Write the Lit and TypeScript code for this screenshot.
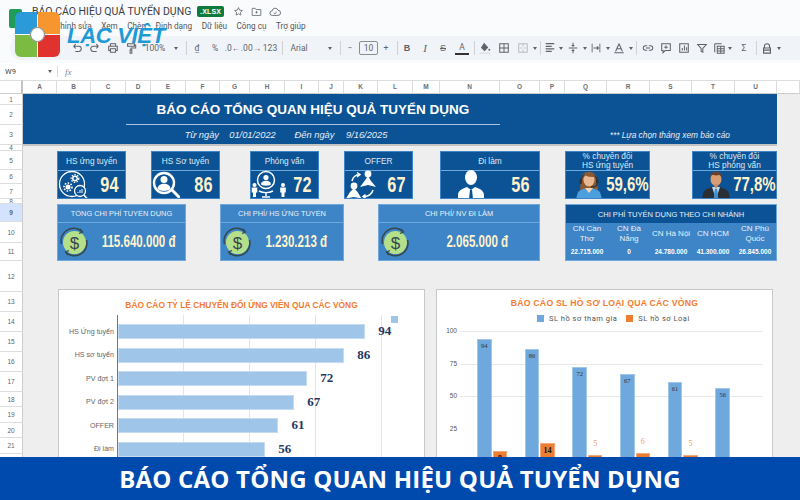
import { LitElement, html, css, svg } from "lit";
import { customElement } from "lit/decorators.js";

const COLS = ["A","B","C","D","E","F","G","H","I","J","K","L","M","N","O","P","Q","R","S","T","U"];
const ROWS = Array.from({ length: 23 }, (_, i) => i + 1);

const s = (inner: unknown, w = 12, h = 12) =>
  html`<svg width=${w} height=${h} viewBox="0 0 14 14" fill="none" stroke="#5f6368" stroke-width="1.200">${inner}</svg>`;

const TB: Record<string, unknown> = {
  undo: svg`<path d="M3 5h6a3 3 0 0 1 0 6H5M3 5l2.500-2.500M3 5l2.500 2.500"/>`,
  redo: svg`<path d="M11 5H5a3 3 0 0 0 0 6h4M11 5L8.500 2.500M11 5L8.500 7.500"/>`,
  print: svg`<path d="M4 5V2h6v3M4 10H2V5h10v5h-2M4 8h6v4H4z"/>`,
  paint: svg`<path d="M3 2h8v3H3zM11 3.500h1.500V7H7v2M6 9h2v4H6z"/>`,
  fill: svg`<path d="M6 2l4 4.500-3.500 3.500L3 6.500z" fill="#5f6368"/><circle cx="12" cy="9" r="1.100" fill="#5f6368" stroke="none"/><path d="M1 13h12" stroke="#ddd" stroke-width="1.500"/>`,
  borders: svg`<path d="M2 2h10v10H2zM7 2v10M2 7h10"/>`,
  merge: svg`<path d="M2 2h10v10H2zM7 2v3M7 9v3M4 7h2M8 7h2" stroke="#b9bcc0"/>`,
  align: svg`<path d="M2 2h10M2 5h7M2 8h10M2 11h7" stroke-width="1.400"/>`,
  valign: svg`<path d="M2 7h10M7 1v3.500M7 9.500V13M5.500 3.500L7 5l1.500-1.500M5.500 10.500L7 9l1.500 1.500"/>`,
  wrap: svg`<path d="M2.500 2v10M11.500 2v10" stroke-width="1"/><path d="M4 7h6M8 5l2 2-2 2"/>`,
  rotate: svg`<path d="M7 2l-4 9M7 2l4 9M4.500 8h5M1.500 12.500h11"/>`,
  link: svg`<path d="M6 4.500H4a2.500 2.500 0 0 0 0 5h2M8 4.500h2a2.500 2.500 0 0 1 0 5H8M4.500 7h5"/>`,
  comment: svg`<path d="M2 2h10v8H6l-2.500 2.500V10H2zM7 4v4M5 6h4"/>`,
  chart: svg`<path d="M2 2h10v10H2zM5 10V7M7.500 10V4M10 10V6"/>`,
  filter: svg`<path d="M2 3h10L8 7.500V12L6 11V7.500z"/>`,
  table: svg`<path d="M2 2h8M2 2v10M5 5h8v8H5zM5 8h8M5 10.500h8M9 5v8" stroke-width="1.200"/>`,
  lock: svg`<path d="M4 7V5a3 3 0 0 1 6 0v2M3 7h8v6H3zM3 9.500h8" stroke-width="1.300"/>`,
};

type Tool = { t: string; v?: string; w?: number };
const sp = (w: number): Tool => ({ t: "sp", w });
const TOOLS: Tool[] = [
  { t: "i", v: "undo" }, { t: "i", v: "redo" }, { t: "i", v: "print" }, { t: "i", v: "paint" },
  { t: "x", v: "100%", w: 30 }, { t: "c", w: 8 }, sp(5), { t: "sep" },
  { t: "x", v: "₫", w: 14 }, sp(2), { t: "x", v: "%", w: 18 }, { t: "x", v: ".0←", w: 17 }, { t: "x", v: ".00→", w: 20 }, { t: "x", v: "123", w: 18 }, { t: "sep" },
  sp(4), { t: "x", v: "Arial", w: 18 }, { t: "c", w: 24 }, sp(5), { t: "sep" },
  { t: "x", v: "−", w: 12 }, sp(3), { t: "box", v: "10" }, { t: "x", v: "+", w: 16 }, { t: "sep" },
  { t: "b", v: "B", w: 12 }, sp(3), { t: "em", v: "I" }, { t: "st", v: "S" }, sp(1), { t: "a", v: "A" }, { t: "sep" },
  { t: "i", v: "fill", w: 14 }, sp(3), { t: "i", v: "borders" }, sp(1), { t: "i", v: "merge" }, { t: "c", w: 5 }, { t: "sep" },
  { t: "i", v: "align", w: 12 }, { t: "c", w: 7 }, sp(1), { t: "i", v: "valign" }, { t: "c", w: 5 }, { t: "i", v: "wrap" }, { t: "c", w: 5 }, { t: "i", v: "rotate" }, { t: "c", w: 5 }, { t: "sep" },
  { t: "i", v: "link", w: 16 }, sp(1), { t: "i", v: "comment" }, { t: "i", v: "chart" }, { t: "i", v: "filter" }, { t: "i", v: "table", w: 16 }, { t: "c", w: 5 }, sp(3), { t: "x", v: "Σ", w: 18 }, { t: "sep" },
  { t: "i", v: "lock", w: 14 }, { t: "c", w: 7 },
];

const icon1 = svg`<svg class="ic" width="31" height="29" viewBox="0 0 31 29" fill="none" stroke="#fff">
  <circle cx="14" cy="14" r="12.500" stroke-width="1.300"/>
  <circle cx="17" cy="8.500" r="2.200" stroke-width="1.500"/><circle cx="17" cy="8.500" r="3.800" stroke-width="1.300" stroke-dasharray="1.500 1.300"/>
  <circle cx="10" cy="17" r="2.500" fill="#fff" stroke="none"/><circle cx="10" cy="17" r="4" stroke-width="1.600" stroke-dasharray="1.600 1.400"/>
  <circle cx="22" cy="21" r="5.500" fill="#0b5394" stroke-width="1.300"/><path d="M26 25l3 3.500" stroke-width="1.500"/>
  <path d="M20 23v-1M22 23v-3M24 23v-4" stroke-width="1"/></svg>`;
const icon2 = svg`<svg class="ic" width="28" height="29" viewBox="0 0 28 29" fill="none" stroke="#fff">
  <circle cx="12" cy="13" r="10" stroke-width="2.400"/><path d="M20 20l7 7" stroke-width="3" stroke-linecap="round"/>
  <circle cx="12" cy="9.500" r="3.500" fill="#fff" stroke="none"/><path d="M5.500 19c0-7 13-7 13 0-3 2.500-10 2.500-13 0z" fill="#fff" stroke="none"/></svg>`;
const person = (x: number, y: number, k = 1) => svg`<g transform="translate(${x} ${y}) scale(${k})" fill="#fff" stroke="none"><circle cx="0" cy="2" r="2"/><path d="M-2.800 4.500h5.600v5H1.500V14h-3V9.500h-1.300z"/></g>`;
const icon3 = svg`<svg class="ic" width="37" height="29" viewBox="0 0 37 29" fill="none" stroke="#fff">
  <circle cx="15" cy="10" r="8.500" stroke-width="1.500"/><circle cx="15" cy="7.500" r="2.600" fill="#fff" stroke="none"/>
  <path d="M10 14.500c0-5 10-5 10 0-2.500 1.600-7.500 1.600-10 0z" fill="#fff" stroke="none"/>
  <path d="M8 21c4 2 10 2 14 0M15 22v4M11 27h8" stroke-width="1.500"/>
  ${person(3.500, 13)}${person(32, 13)}</svg>`;
const icon4 = svg`<svg class="ic" width="34" height="29" viewBox="0 0 34 29" fill="none" stroke="#fff">
  <circle cx="23" cy="4" r="3.400" fill="#fff" stroke="none"/><path d="M23 6l3 5 5 6-8-2-8 2 4.500-6z" fill="#fff" stroke="none"/>
  <circle cx="9" cy="16" r="3.400" fill="#fff" stroke="none"/><path d="M9 18l3.500 4 4 6.500-7.500-1.500-8 1.500 4-6.500z" fill="#fff" stroke="none"/>
  <path d="M7 11c1-4 3-6 7-6.500M12 2.500l3 2-3 2.500M28 20c-1 4-5 7-9 6.500M20.500 24.500L18 26.500l3 2" stroke-width="1.500"/></svg>`;
const icon5 = svg`<svg class="ic" width="28" height="29" viewBox="0 0 28 29">
  <ellipse cx="14" cy="7.500" rx="6" ry="7.500" fill="#fff"/><path d="M1 29v-4c0-5 6-7 9-8l4 3 4-3c3 1 9 3 9 8v4z" fill="#fff"/>
  <path d="M13 20h2l1 9h-4z" fill="#0b5394"/></svg>`;
const icon6 = svg`<svg class="ic" width="28" height="29" viewBox="0 0 28 29">
  <path d="M6 10c0-11 16-11 16 0l1 10H5z" fill="#8a5a35"/><ellipse cx="14" cy="10" rx="5.500" ry="6.500" fill="#eab994"/>
  <path d="M1 29l2-7c2-2 7-4 11-4s9 2 11 4l2 7z" fill="#4a9fdc"/><path d="M10 18l4 5 4-5z" fill="#f4d3b8"/>
  <path d="M6 11c0-10 16-10 16 0" fill="none" stroke="#333" stroke-width="1.200"/><rect x="4.500" y="9" width="2.500" height="5" rx="1" fill="#333"/><rect x="21" y="9" width="2.500" height="5" rx="1" fill="#333"/>
  <path d="M22 14c0 2-3 3-6 3" fill="none" stroke="#333" stroke-width="1.300"/><path d="M9 4c2 3 7 3 11 3 0-5-9-6-11-3z" fill="#8a5a35"/></svg>`;
const icon7 = svg`<svg class="ic" width="28" height="29" viewBox="0 0 28 29">
  <path d="M0 29l1.500-7c2-3 7-5 12.500-5s10.500 2 12.500 5l1.500 7z" fill="#2a2e35"/><path d="M10 17l4 12 4-12z" fill="#bfd9ee"/>
  <path d="M12.800 19h2.400l1 9-2.200 1-2.200-1z" fill="#3f8fd0"/><ellipse cx="14" cy="9" rx="5.500" ry="7" fill="#d99c73"/><path d="M11 14l3 5 3-5z" fill="#c98c63"/>
  <path d="M8 9c-1-9 13-10 12 0-1-3-2-4-3-4-3 1-6 0-7 0-1 1-2 2-2 4z" fill="#6b4226"/></svg>`;

const KPIS = [
  { t: ["HS ứng tuyển"], n: "94", ic: icon1, cls: "" },
  { t: ["HS Sơ tuyển"], n: "86", ic: icon2, cls: "" },
  { t: ["Phỏng vấn"], n: "72", ic: icon3, cls: "" },
  { t: ["OFFER"], n: "67", ic: icon4, cls: "" },
  { t: ["Đi làm"], n: "56", ic: icon5, cls: "wide" },
  { t: ["% chuyển đổi", "HS ứng tuyển"], n: "59,6%", ic: icon6, cls: "pct" },
  { t: ["% chuyển đổi", "HS phỏng vấn"], n: "77,8%", ic: icon7, cls: "pct" },
];
const kpiCols = ["b", "e", "h", "k", "n", "q", "t"];

const COSTS = [
  { k: "cb", t: "TỔNG CHI PHÍ TUYỂN DỤNG", v: "115.640.000 đ" },
  { k: "cg", t: "CHI PHÍ/ HS ỨNG TUYỂN", v: "1.230.213 đ" },
  { k: "cl", t: "CHI PHÍ/ NV ĐI LÀM", v: "2.065.000 đ" },
];
const BRANCH: [string[], string][] = [
  [["CN Cần", "Thơ"], "22.715.000"], [["CN Đà", "Nẵng"], "0"], [["CN Hà Nội"], "24.780.000"], [["CN HCM"], "41.300.000"], [["CN Phú", "Quốc"], "26.845.000"],
];
const FUNNEL = [["HS Ứng tuyển", 94], ["HS sơ tuyển", 86], ["PV đợt 1", 72], ["PV đợt 2", 67], ["OFFER", 61], ["Đi làm", 56]] as [string, number][];
const COLUMNS = [[94, 8], [86, 14], [72, 5], [67, 6], [61, 5], [56, 0]];

const coin = svg`<svg class="coin" width="32" height="32" viewBox="0 0 32 32" fill="none">
  <circle cx="16.500" cy="16.500" r="11.500" fill="#b5e08a"/>
  <path d="M3.500 18A12.500 12.500 0 0 1 24 5.500M28.500 14A12.500 12.500 0 0 1 8 26.500" stroke="#37474f" stroke-width="1.500"/>
  <path d="M22 3l2.500 3-3.500 1.500M10 29l-2.500-3 3.500-1.500" stroke="#37474f" stroke-width="1.300"/>
  <text x="16.500" y="22.500" text-anchor="middle" font-family="Liberation Sans, sans-serif" font-size="17" fill="#37474f" stroke="none">$</text></svg>`;

@customElement("app-root")
export class AppRoot extends LitElement {
  static styles = css`
    :host { display: block; width: 800px; height: 500px; font-family: "Roboto", "Liberation Sans", sans-serif; }
    * { box-sizing: border-box; }
    .page { position: relative; width: 800px; height: 500px; overflow: hidden; background: #f9fbfd; display: flex; flex-direction: column; color: #444746; }
    .head { height: 36px; flex: none; position: relative; }
    .file { display: flex; align-items: center; height: 20px; padding: 3px 0 0 32px; gap: 7px; }
    .file .name { font-size: 10.500px; color: #3c4043; white-space: nowrap; width: 158px; }
    .badge { background: #0e7a3c; color: #fff; font: bold 7px "Liberation Sans", sans-serif; padding: 2px 3px; border-radius: 2px; letter-spacing: .2px; margin-right: 1.500px; }
    .sheeticon { position: absolute; left: 9px; top: 9px; width: 13px; height: 19px; background: #1f9d58; border-radius: 2px; }
    .menu { display: flex; gap: 9.500px; padding-left: 55px; font-size: 8.200px; color: #555; height: 12px; align-items: center; white-space: nowrap; }
    .tools { height: 24px; flex: none; margin-left: 10px; padding-left: 58px; background: #f0f4f9; display: flex; align-items: center; border-radius: 12px 0 0 12px; font: 8.500px "Roboto", sans-serif; color: #5f6368; white-space: nowrap; overflow: hidden; }
    .tool { width: 18px; height: 18px; display: flex; align-items: center; justify-content: center; flex: none; }
    .spc { flex: none; height: 1px; }
    .sep { width: 1px; height: 14px; background: #d0d3d6; margin: 0 3px; flex: none; }
    .caret { display: flex; justify-content: flex-end; align-items: center; flex: none; height: 18px; }
    .caret::after { content: ""; border: 2.500px solid transparent; border-top: 3px solid #5f6368; border-bottom: 0; }
    .numbox { width: 19px; height: 14px; border: 1px solid #8a8d90; border-radius: 2px; text-align: center; line-height: 12px; flex: none; }
    .tb { font-weight: bold; font-family: "Liberation Sans", sans-serif; font-size: 9px; }
    .ti { font-style: italic; font-family: "Liberation Serif", serif; font-size: 11px; }
    .ts { text-decoration: line-through; font-family: "Liberation Sans", sans-serif; font-size: 9px; }
    .ta { border-bottom: 2px solid #333; height: 13px; width: 14px; line-height: 10px; text-align: center; font-size: 8.500px; }
    .fx { height: 20px; flex: none; background: #fff; border-top: 3px solid #f9fbfd; display: flex; align-items: center; font-size: 7.500px; color: #444746; padding-left: 5px; }
    .fx .ref { width: 38px; }
    .fx .caret { width: 9px; }
    .fx .s2 { width: 1px; height: 11px; background: #ddd; margin: 0 7px 0 5px; }
    .fx i { font-family: "Liberation Serif", serif; color: #80868b; font-size: 9px; }

    .sheet { flex: 1; background: #eeeeee; display: grid; overflow: hidden;
      grid-template-columns: 23px 34px 34px 35px 25px 35px 34px 30px 35px 34px 25px 34px 35px 27px 60px 40px 25px 42px 43px 42px 43px 42px 23px;
      grid-template-rows: 14px 11px 20px 20px 6px 19px 14px 15px 5px 18px 21px 18px 31px 20px 20px 20px 20px 20px 15px 16px 15px 16px 16px 30px; }
    .corner { grid-column: 1; grid-row: 1; background: #fff; border-top: 1px solid #ddd; border-right: 2px solid #c4c4c4; border-bottom: 1px solid #ccc; }
    .colh { grid-row: 1; background: #fff; border-top: 1px solid #ddd; border-right: 1px solid #ddd; border-bottom: 1px solid #ccc; font: bold 6.500px "Liberation Sans", sans-serif; color: #6b6f73; display: flex; align-items: center; justify-content: center; padding-bottom: 1px; }
    .colv { grid-column: 23; }
    .rowh { grid-column: 1; background: #fff; border-bottom: 1px solid #ddd; border-right: 1px solid #ccc; font: 6.500px "Liberation Sans", sans-serif; color: #5f6368; display: flex; align-items: center; justify-content: center; overflow: hidden; }
    .rowh.sel { background: #d3e3fd; font-weight: bold; }
    .band { grid-column: 2 / 23; grid-row: 2 / 5; background: #0b5394; border-bottom: 2px solid #c4c4c4; margin-bottom: -1px; }
    .title { grid-column: 5 / 16; grid-row: 2 / 4; border-bottom: 1px solid #a9c5e6; color: #fff; font: bold 13.500px "Liberation Sans", sans-serif; display: flex; align-items: center; justify-content: center; white-space: nowrap; padding-top: 1px; }
    .meta { grid-row: 4; color: #e6eef7; font: italic 9.300px "Liberation Sans", sans-serif; display: flex; align-items: center; white-space: nowrap; justify-content: center; }
    .m1 { grid-column: 6 / 8; justify-content: flex-end; padding-right: 1px; }
    .m2 { grid-column: 8 / 10; }
    .m3 { grid-column: 10 / 12; }
    .m4 { grid-column: 12 / 14; justify-content: flex-start; padding-left: 2px; }
    .m5 { grid-column: 18 / 22; justify-content: flex-end; padding-right: 5px; font-size: 8.350px; }

    .kpi { grid-row: 6 / 9; background: #0b5394; border: 1px solid #3d85c6; display: flex; flex-direction: column; min-width: 0; overflow: hidden; }
    .kpi.b { grid-column: 3 / 5; } .kpi.e { grid-column: 6 / 8; } .kpi.h { grid-column: 9 / 11; } .kpi.k { grid-column: 12 / 14; }
    .kpi.n { grid-column: 15 / 17; } .kpi.q { grid-column: 18 / 20; } .kpi.t { grid-column: 21 / 23; }
    .kpi .hd { height: 19px; flex: none; border-bottom: 1px solid #6fa8dc; color: #dfe9f5; font: 8.300px/1.050 "Liberation Sans", sans-serif; display: flex; flex-direction: column; align-items: center; justify-content: center; }
    .kpi .bd { flex: 1; display: flex; align-items: center; justify-content: flex-end; padding: 0 7px 0 0; min-height: 0; }
    .kpi .ic { flex: none; display: block; margin-right: auto; }
    .num { flex: none; white-space: nowrap; margin-left: -60px; transform-origin: right center; transform: scaleX(.74); font-family: "Liberation Sans", sans-serif; font-weight: bold; color: #fff2cc; font-size: 22px; }
    .kpi.wide .bd { padding: 0 10px 0 16px; }
    .kpi.pct .bd { padding: 0 0 0 9px; }
    .kpi.pct .num { font-size: 20px; transform: scaleX(.75); }
    .cost { grid-row: 10 / 13; background: #3d85c6; border: 1px solid #6fa8dc; display: flex; flex-direction: column; }
    .cost.cb { grid-column: 3 / 7; } .cost.cg { grid-column: 8 / 12; } .cost.cl { grid-column: 13 / 17; }
    .cost .hd { height: 18px; flex: none; border-bottom: 1px solid #6fa8dc; color: #e8f0f9; font: 7.400px "Liberation Sans", sans-serif; display: flex; align-items: center; justify-content: center; }
    .cost .bd { flex: 1; display: flex; align-items: center; justify-content: flex-end; padding: 0 9px 0 0; }
    .cost .num { font-size: 16.500px; transform: scaleX(.7); }
    .cost.cg .bd { padding-right: 16px; }
    .cost.cl .bd { padding-right: 31px; }
    .coin { flex: none; margin-right: auto; }
    .branch { grid-column: 18 / 23; grid-row: 10 / 13; background: #3d85c6; border: 1px solid #6fa8dc; display: flex; flex-direction: column; }
    .branch .hd { height: 18px; flex: none; background: #0b5394; color: #e8f0f9; font: 7.550px "Liberation Sans", sans-serif; display: flex; align-items: center; justify-content: center; }
    .branch .cols { flex: 1; display: grid; grid-template-columns: repeat(5, 1fr); }
    .branch .col { display: flex; flex-direction: column; align-items: center; color: #e8f0f9; text-align: center; padding-top: 1px; min-width: 0; }
    .branch .lab { font: 8px/9.500px "Liberation Sans", sans-serif; height: 19px; display: flex; flex-direction: column; justify-content: center; white-space: nowrap; }
    .branch .val { font: bold 6.500px "Liberation Sans", sans-serif; color: #fff; white-space: nowrap; margin-top: 5px; }

    .chart { grid-row: 13 / 25; background: #fff; border: 1px solid #c8c8c8; margin-top: 28px; overflow: hidden; }
    .c1 { grid-column: 3 / 15; margin-left: 1px; margin-right: 15px; }
    .c2 { grid-column: 15 / 23; margin-left: -4px; margin-right: 4px; }
    .ctitle { color: #f47b30; font: bold 8.400px "Liberation Sans", sans-serif; text-align: center; white-space: nowrap; }
    .c1 .ctitle { padding-top: 10px; height: 25px; }
    .plot1 { margin-left: 58px; height: 142px; border-left: 1px solid #777; display: flex; flex-direction: column; gap: 8.600px; padding-top: 9px; position: relative;
      background: repeating-linear-gradient(90deg, transparent 0 65px, #e4e4e4 65px 66px); }
    .frow { display: flex; align-items: center; height: 15px; flex: none; }
    .flab { position: absolute; right: 100%; margin-right: 4px; font: 7.100px "Liberation Sans", sans-serif; color: #666; white-space: nowrap; }
    .fbar { height: 15px; background: #9fc5e8; border: 1px solid #c4dbf1; flex: none; }
    .fval { font: bold 13px "Liberation Serif", serif; color: #1f3864; margin-left: 13px; margin-top: -1px; }
    .mini { position: absolute; left: 273px; top: 1px; width: 7px; height: 7px; background: #9fc5e8; }
    .c2 .ctitle { font-size: 8.700px; letter-spacing: .25px; padding-top: 8px; height: 21px; }
    .legend { display: flex; gap: 9px; padding-left: 100px; height: 14px; align-items: center; font: 7.500px "Roboto", sans-serif; letter-spacing: .5px; color: #555; white-space: nowrap; }
    .legend span { display: flex; align-items: center; gap: 5px; }
    .legend b { width: 7px; height: 7px; display: block; }
    .blue { background: #6fa8dc; } .orange { background: #ed7d31; }
    .plot2 { display: flex; height: 135px; padding-top: 6px; margin-left: 2px; }
    .yaxis { width: 21px; height: 130px; padding-right: 3px; font: 6.500px "Liberation Sans", sans-serif; color: #555; display: flex; flex-direction: column; justify-content: space-between; align-items: flex-end; }
    .yaxis div { height: 0; line-height: 0; }
    .bars { width: 302px; height: 130px; display: flex; align-items: flex-end; padding-left: 17px; border-top: 1px solid #e8e8e8;
      background: repeating-linear-gradient(180deg, transparent 0 31.500px, #e8e8e8 31.500px 32.500px); }
    .grp { width: 47.700px; flex: none; display: flex; align-items: flex-end; height: 100%; gap: 1px; }
    .bar { width: 14.500px; flex: none; position: relative; display: flex; justify-content: center; border: 1px solid rgba(255,255,255,.35); }
    .bar span { font: 6.500px "Liberation Serif", serif; color: #333; padding-top: 2px; }
    .bar.orange span { font: bold 8px "Liberation Serif", serif; color: #111; }
    .bar.orange.small span { position: absolute; bottom: 100%; margin-bottom: 8px; color: #f59a5a; font-weight: normal; }

    .logo { position: absolute; left: 14px; top: 11px; display: flex; align-items: center; gap: 6px; }
    .lac { font: italic bold 22px "Liberation Sans", sans-serif; color: #1e9ad6; letter-spacing: -.3px; white-space: nowrap; padding-top: 2px; }
    .banner { position: absolute; left: 0; right: 0; bottom: 0; height: 43px; background: #004aad; color: #fff; display: flex; align-items: center; justify-content: center; font: bold 24px "Open Sans", sans-serif; letter-spacing: .2px; white-space: nowrap; }
  `;

  private tool(t: Tool) {
    const w = t.w ? `width:${t.w}px` : "";
    switch (t.t) {
      case "i": return html`<div class="tool" style=${w}>${s(TB[t.v!])}</div>`;
      case "x": return html`<div class="tool" style=${w}>${t.v}</div>`;
      case "c": return html`<div class="caret" style=${w}></div>`;
      case "sp": return html`<div class="spc" style=${w}></div>`;
      case "sep": return html`<div class="sep"></div>`;
      case "box": return html`<div class="numbox">${t.v}</div>`;
      case "b": return html`<div class="tool tb" style=${w}>${t.v}</div>`;
      case "em": return html`<div class="tool ti">${t.v}</div>`;
      case "st": return html`<div class="tool ts">${t.v}</div>`;
      default: return html`<div class="tool"><div class="ta">${t.v}</div></div>`;
    }
  }

  render() {
    return html`<div class="page">
      <div class="head">
        <div class="sheeticon"></div>
        <div class="file">
          <div class="name">BÁO CÁO HIỆU QUẢ TUYỂN DỤNG</div>
          <div class="badge">.XLSX</div>
          ${s(svg`<path d="M7 2l1.500 3.300 3.500.4-2.600 2.400.7 3.500L7 9.900 3.900 11.600l.7-3.500L2 5.700l3.500-.4z" stroke-width="1"/>`, 11, 11)}
          ${s(svg`<path d="M1.500 3h4l1 1.500h6V12h-11zM7 6.500v3M5.500 8h3" stroke-width="1"/>`, 11, 11)}
          ${s(svg`<path d="M4 11a2.700 2.700 0 0 1-.3-5.400A3.500 3.500 0 0 1 10.500 5 3 3 0 0 1 10.500 11zM5.500 8l1.200 1.200L9 7" stroke-width="1"/>`, 12, 12)}
        </div>
        <div class="menu"><span>Chỉnh sửa</span><span>Xem</span><span>Chèn</span><span>Định dạng</span><span>Dữ liệu</span><span>Công cụ</span><span>Trợ giúp</span></div>
      </div>
      <div class="tools">${TOOLS.map((t) => this.tool(t))}</div>
      <div class="fx"><span class="ref">W9</span><span class="caret"></span><span class="s2"></span><i>fx</i></div>

      <div class="sheet">
        <div class="corner"></div>
        ${COLS.map((c, i) => html`<div class="colh" style="grid-column:${i + 2}">${c}</div>`)}
        <div class="colh colv"></div>
        ${ROWS.map((r) => html`<div class="rowh ${r === 9 ? "sel" : ""}" style="grid-row:${r + 1}">${r}</div>`)}

        <div class="band"></div>
        <div class="title">BÁO CÁO TỔNG QUAN HIỆU QUẢ TUYỂN DỤNG</div>
        <div class="meta m1">Từ ngày</div>
        <div class="meta m2">01/01/2022</div>
        <div class="meta m3">Đến ngày</div>
        <div class="meta m4">9/16/2025</div>
        <div class="meta m5">*** Lựa chọn tháng xem báo cáo</div>

        ${KPIS.map((k, i) => html`<div class="kpi ${kpiCols[i]} ${k.cls}">
          <div class="hd">${k.t.map((l) => html`<div>${l}</div>`)}</div>
          <div class="bd">${k.ic}<div class="num">${k.n}</div></div>
        </div>`)}

        ${COSTS.map((c) => html`<div class="cost ${c.k}">
          <div class="hd">${c.t}</div>
          <div class="bd">${coin}<div class="num">${c.v}</div></div>
        </div>`)}

        <div class="branch">
          <div class="hd">CHI PHÍ TUYỂN DỤNG THEO CHI NHÁNH</div>
          <div class="cols">${BRANCH.map(([l, v]) => html`<div class="col"><div class="lab">${l.map((x) => html`<div>${x}</div>`)}</div><div class="val">${v}</div></div>`)}</div>
        </div>

        <div class="chart c1">
          <div class="ctitle">BÁO CÁO TỶ LỆ CHUYỂN ĐỔI ỨNG VIÊN QUA CÁC VÒNG</div>
          <div class="plot1">
            <div class="mini"></div>
            ${FUNNEL.map(([l, v]) => html`<div class="frow">
              <div class="flab">${l}</div>
              <div class="fbar" style="width:${v * 2.63}px"></div>
              <div class="fval">${v}</div>
            </div>`)}
          </div>
        </div>

        <div class="chart c2">
          <div class="ctitle">BÁO CÁO SL HỒ SƠ LOẠI QUA CÁC VÒNG</div>
          <div class="legend"><span><b class="blue"></b>SL hồ sơ tham gia</span><span><b class="orange"></b>SL hồ sơ Loại</span></div>
          <div class="plot2">
            <div class="yaxis">${[100, 75, 50, 25, ""].map((y) => html`<div>${y}</div>`)}</div>
            <div class="bars">
              ${COLUMNS.map(([a, b]) => html`<div class="grp">
                <div class="bar blue" style="height:${a * 1.3}px"><span>${a}</span></div>
                ${b ? html`<div class="bar orange ${b < 8 ? "small" : ""}" style="height:${b * 1.3}px"><span>${b}</span></div>` : ""}
              </div>`)}
            </div>
          </div>
        </div>
      </div>

      <div class="logo">
        <svg width="47" height="47" viewBox="0 0 47 47">
          <path d="M7 1h16v22H1V7a6 6 0 0 1 6-6z" fill="#2a9bd8"/>
          <path d="M24 1h16a6 6 0 0 1 6 6v16H24z" fill="#f7952f"/>
          <path d="M1 24h22v22H7a6 6 0 0 1-6-6z" fill="#7cbb42"/>
          <path d="M24 24h22v16a6 6 0 0 1-6 6H24z" fill="#e03330"/>
          <circle cx="23.500" cy="23.500" r="7" fill="#fff" stroke="#999" stroke-width="1.200"/>
        </svg>
        <div class="lac">LẠC VIỆT</div>
      </div>
      <div class="banner">BÁO CÁO TỔNG QUAN HIỆU QUẢ TUYỂN DỤNG</div>
    </div>`;
  }
}
